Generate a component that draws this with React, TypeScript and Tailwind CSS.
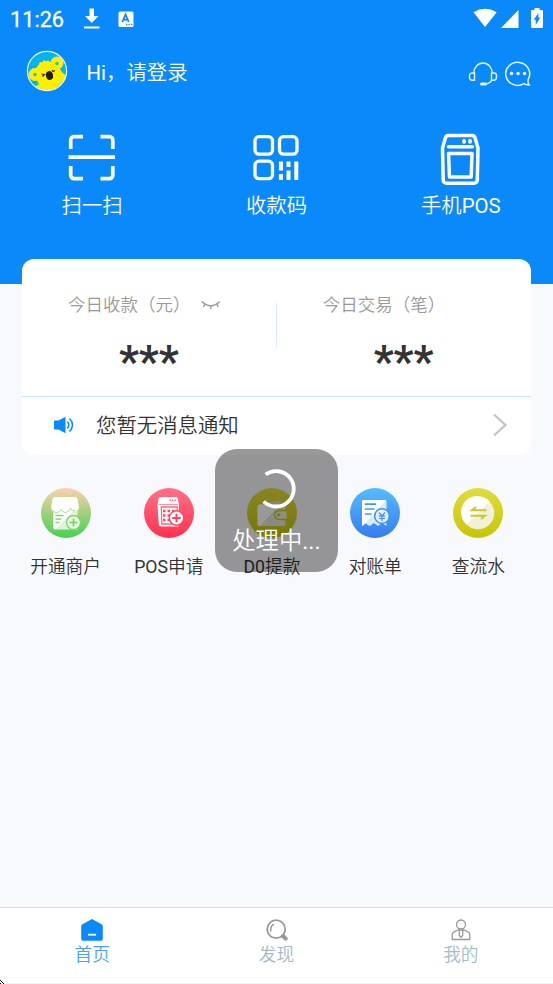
import type { ReactNode } from 'react';

function Avatar() {
  return (
    <svg width="42" height="42" viewBox="0 0 42 42">
      <defs>
        <clipPath id="face"><circle cx="21" cy="21" r="19.5" /></clipPath>
      </defs>
      <circle cx="21" cy="21" r="20" fill="#00b4f0" />
      <g clipPath="url(#face)">
        <path d="M13 16l.5-4 3 .3 1-2.300 3 1.500 1.500-1.500 2 3 5 1 8 9 6 5v14H6l1-4 6-3.500-4-8z" fill="#ffee00" />
        <circle cx="31" cy="13" r="6.500" fill="#ffee00" />
        <circle cx="9" cy="24.500" r="6.500" fill="#ffee00" />
        <ellipse cx="22" cy="23" rx="13" ry="11.500" fill="#ffee00" />
        <circle cx="31" cy="13.500" r="1.800" fill="#35bfae" />
        <circle cx="9" cy="24.500" r="1.800" fill="#35bfae" />
        <path d="M37 32l-8 7M12 34l-5 4" stroke="#8fca40" strokeWidth="1" />
        <ellipse cx="23.500" cy="25.500" rx="3.500" ry="4.400" transform="rotate(-15 23.500 25.500)" fill="#201a18" />
        <path d="M15.500 24l3 .5-2 2M26 20l1 1.500 2-1" stroke="#2b2505" strokeWidth="1.100" fill="none" />
      </g>
      <circle cx="21" cy="21" r="19.600" fill="none" stroke="#e6f6ff" strokeWidth="1.200" />
    </svg>
  );
}

function StatusBar() {
  return (
    <div className="flex h-[38px] items-center pl-[10px] pr-[10px]">
      <span className="w-[73px] pt-px text-[21.700px] leading-[38px] [-webkit-text-stroke:0.3px_white]">11:26</span>
      <svg width="18" height="22" viewBox="0 0 18 22" fill="#fff">
        <path d="M6.500 .5h4.500v7.500h4.500L8.750 15 2 8h4.500zM1 18.500h15.500v2H1z" />
      </svg>
      <svg className="-mt-px ml-[16.500px]" width="16" height="16" viewBox="0 0 16 16">
        <rect x=".5" y=".5" width="15" height="15.500" rx="1.500" fill="#fff" />
        <path d="M4.300 11L7.500 3.500 10.700 11M5.500 8.700h4" stroke="#0a89fb" strokeWidth="1.800" fill="none" />
        <path d="M8 13.500h1.300M10.500 13.500h1.300M13 13.500h1.300" stroke="#0a89fb" strokeWidth="1.300" />
      </svg>
      <div className="-mt-[2px] ml-auto flex items-center">
        <svg width="24" height="20" viewBox="0 0 24 20"><path d="M.5 4.200Q12-2.600 23.700 4.200L12 19z" fill="#fff" /></svg>
        <svg className="ml-[4px] mt-[2px]" width="18" height="18" viewBox="0 0 18 18"><path d="M17.500 0v18H0z" fill="#fff" /></svg>
        <svg className="ml-[12px]" width="12" height="20" viewBox="0 0 12 20">
          <path d="M3.500 0h5v2H11a1 1 0 0 1 1 1v16a1 1 0 0 1-1 1H1a1 1 0 0 1-1-1V3a1 1 0 0 1 1-1h2.500z" fill="#fff" />
          <path d="M7.300 5v4.500h2L4.700 17v-5.200h-2z" fill="#0a89fb" />
        </svg>
      </div>
    </div>
  );
}

function ScanIcon() {
  return (
    <svg width="52" height="52" viewBox="0 0 52 52" fill="none" stroke="#fff" strokeWidth="3.700">
      <path d="M4.700 17V8a3.300 3.300 0 0 1 3.300-3.300h9M34.500 4.700h9A3.300 3.300 0 0 1 46.800 8v9M4.700 34v9.300a3.300 3.300 0 0 0 3.300 3.300h9M34.500 46.600h9a3.300 3.300 0 0 0 3.300-3.300V34M2.500 25.200h46.500" />
    </svg>
  );
}

function QrIcon() {
  return (
    <svg width="52" height="52" viewBox="0 0 52 52" fill="none" stroke="#fff" strokeWidth="3.300">
      <rect x="5" y="4.700" width="17.500" height="17.500" rx="4" />
      <rect x="29.500" y="4.700" width="17.500" height="17.500" rx="4" />
      <rect x="5" y="29.200" width="17.500" height="17.500" rx="4" />
      <g strokeWidth="4">
        <path d="M30.900 29.500v9M30.900 42v6M38.500 29.500v5.500M38.500 38.500v9.500M46.300 29.500v18.500" />
      </g>
    </svg>
  );
}

function PosIcon() {
  return (
    <svg width="52" height="56" viewBox="0 0 52 56" fill="none" stroke="#fff" strokeWidth="3.500" strokeLinejoin="round">
      <path d="M13.500 5.500h23.500a3 3 0 0 1 3 2.200l3 10.300-.7 32a3.300 3.300 0 0 1-3.300 3.300h-27.500A3.300 3.300 0 0 1 8.200 50L7.500 18l3-10.300a3 3 0 0 1 3-2.200z" />
      <path d="M13.500 16.800h24" strokeLinecap="round" />
      <path d="M13.500 23.500h23.500l-.8 23.500H14.500z" />
      <ellipse cx="29" cy="11.300" rx="2" ry="2.500" fill="#fff" stroke="none" />
      <ellipse cx="35" cy="11.300" rx="2" ry="2.500" fill="#fff" stroke="none" />
    </svg>
  );
}

function QuickAction({ icon, label }: { icon: ReactNode; label: string }) {
  return (
    <div className="flex flex-1 flex-col items-center">
      <div className="flex h-[56px] items-center justify-center">{icon}</div>
      <span className="mt-[5px] text-[20.400px] leading-[30px]">{label}</span>
    </div>
  );
}

function Header() {
  return (
    <header className="h-[284px] bg-[#0a89fb] text-white">
      <StatusBar />
      <div className="flex h-[68px] items-center pl-[26px] pr-[21px]">
        <div className="-mt-[2px]"><Avatar /></div>
        <span className="ml-[18.500px] mt-[2px] text-[20.400px] leading-[30px]">Hi，请登录</span>
        <svg className="ml-auto mt-[4px]" width="30" height="26" viewBox="0 0 30 26" fill="none" stroke="#e5f5ff" strokeWidth="1.400">
          <path d="M6.500 12v7.200H4.500a3 3 0 0 1-3-3v-1.500A2.700 2.700 0 0 1 4.200 12zM23.500 12v7.200h2a3 3 0 0 0 3-3v-1.500a2.700 2.700 0 0 0-2.700-2.700z" />
          <path d="M5.800 12a9.200 10 0 0 1 18.400 0M24 19q-2 3.500-6 4" />
          <path d="M13.500 23h4" strokeWidth="3" strokeLinecap="round" />
        </svg>
        <svg className="ml-[6px] mt-[4px]" width="28" height="26" viewBox="0 0 28 26" fill="none" stroke="#e5f5ff" strokeWidth="1.500">
          <path d="M24.300 18.200A12 11.500 0 1 0 20 22.600q2.500 1.500 5.200 1.300-1.700-2-.9-5.700z" />
          <g fill="#fff" stroke="none"><circle cx="7.500" cy="12.500" r="1.700" /><circle cx="14" cy="12.500" r="1.700" /><circle cx="20.500" cy="12.500" r="1.700" /></g>
        </svg>
      </div>
      <div className="flex pt-[24px]">
        <QuickAction icon={<ScanIcon />} label="扫一扫" />
        <QuickAction icon={<QrIcon />} label="收款码" />
        <QuickAction icon={<PosIcon />} label="手机POS" />
      </div>
    </header>
  );
}

function Stat({ title, hidden }: { title: string; hidden?: boolean }) {
  return (
    <div className="flex-1 pt-[32px]">
      <div className="flex h-[28px] items-center pl-[46px] text-[17.500px] leading-[28px] text-[#999]">
        {title}
        {hidden && (
          <svg className="-mt-px ml-[10.500px]" width="20" height="12" viewBox="0 0 20 12" fill="none" stroke="#999" strokeWidth="1.400">
            <path d="M.8 2.500q9 8.500 18 0M4 5.200L2.500 8M9.800 6.800V10M15.800 5.200L17.300 8" />
          </svg>
        )}
      </div>
      <div className="mt-[13px] h-[50px] text-center text-[44px] font-bold leading-[60px] text-[#333]">***</div>
    </div>
  );
}

function SummaryCard() {
  return (
    <section className="-mt-[25px] ml-[22px] mr-[22.500px] h-[196px] rounded-xl bg-white">
      <div className="flex h-[138px] border-b border-[#c7e6ff]">
        <Stat title="今日收款（元）" hidden />
        <div className="mt-[44px] h-[44px] w-px bg-[#d7ebfc]" />
        <Stat title="今日交易（笔）" />
      </div>
      <div className="flex h-[57px] items-center pl-[31px] pr-[23px]">
        <svg className="-mt-px" width="22" height="18" viewBox="0 0 22 18" fill="none" stroke="#0a89fb" strokeWidth="1.500">
          <path d="M1 5.500a1 1 0 0 1 1-1h3.500L12.500 .8v16.400L5.500 13.500H2a1 1 0 0 1-1-1z" fill="#0a89fb" stroke="none" />
          <path d="M14.500 5.500q2.500 3.500 0 7M16.500 2.500q6 6.500 0 13" />
        </svg>
        <span className="ml-[21px] text-[20.400px] leading-[30px] text-[#333]">您暂无消息通知</span>
        <svg className="-mt-px ml-auto" width="16" height="24" viewBox="0 0 16 24" fill="none" stroke="#c3c3c3" strokeWidth="2.200">
          <path d="M2 1.500L13.500 12 2 22.500" />
        </svg>
      </div>
    </section>
  );
}

function Disc({ id, from, to, children }: { id: string; from: string; to: string; children: ReactNode }) {
  return (
    <svg width="50" height="50" viewBox="0 0 50 50">
      <defs>
        <linearGradient id={id} x1="0" y1="0" x2="0" y2="1"><stop stopColor={from} /><stop offset="1" stopColor={to} /></linearGradient>
      </defs>
      <circle cx="25" cy="25" r="25" fill={`url(#${id})`} />
      {children}
    </svg>
  );
}

function MerchantIcon() {
  return (
    <Disc id="merchant" from="#fdd0ac" to="#43d24f">
      <path d="M12.500 21h24v20.500h-22q-2 0-2-2z" fill="#dff3d8" />
      <path d="M12.500 21h22L14 41.500q-1.500 0-1.500-1.500z" fill="#fff" />
      <path d="M14 9h20q2 0 2.500 2l1.500 8q.3 4-4 4-3 0-4.500-2.500-1.700 4-5 4t-4.500-3q-1.500 3-4.500 3-5.500 0-5.200-5.500l1.200-8Q12 9 14 9z" fill="#fff" />
      <path d="M11.300 22q1.200 2.500 4.200 2.500 3 0 4.500-3 1.500 3 4.500 3t5-4q1.500 2.500 4.500 2.500" fill="none" stroke="#9cd488" strokeWidth=".9" />
      <path d="M14.500 27.500h8M14.500 31h5.500M14.500 34.500h4" stroke="#85d173" strokeWidth="1.400" />
      <circle cx="32.500" cy="34.500" r="7" fill="#eef9ea" stroke="#7bd66c" strokeWidth="1.400" />
      <path d="M32.500 30.500v8M28.500 34.500h8" stroke="#6fd45c" strokeWidth="1.700" />
    </Disc>
  );
}

function PosApplyIcon() {
  return (
    <Disc id="pos-apply" from="#ff7287" to="#ff3150">
      <path d="M16 9h16q1.700 0 2 2l1 6-.5 21.500H17q-2 0-2.200-2L13.500 17l1-6q.3-2 1.500-2z" fill="#fff" />
      <path d="M14.500 16.500h19.500" stroke="#ff8e9e" />
      <path d="M25.500 12.300h1.300M28 12.300h1.300M30.500 12.300h1.300" stroke="#ff536d" strokeWidth="1.500" />
      <path d="M17.300 19h16l-.5 17H17.800z" fill="none" stroke="#ff6b80" strokeWidth="1.300" />
      <path d="M19 23h12M19 27.500h12M19 32h8" stroke="#ff4863" strokeWidth="2.500" strokeDasharray="2.500 2" />
      <circle cx="32.500" cy="30" r="7.200" fill="#fff" stroke="#ff4762" strokeWidth="1.400" />
      <path d="M32.500 25.800v8.400M28.300 30h8.400" stroke="#ff435e" strokeWidth="2" />
    </Disc>
  );
}

function WalletIcon() {
  return (
    <Disc id="wallet" from="#e2de3e" to="#c9c60a">
      <path d="M14 16l17-3.500q3 0 3.500 3.500z" fill="#deddb8" />
      <rect x="10.500" y="16.500" width="28" height="21.500" rx="2.500" fill="#e6e6dc" />
      <path d="M13 16.500h20L13 38q-2.500 0-2.500-2.500V19q0-2.500 2.500-2.500z" fill="#fff" />
      <path d="M39.500 22.500H32q-4.500.7-4.500 4.500t4.500 4.500h7.500" fill="#eeeede" stroke="#c9c51a" strokeWidth="1.500" />
      <circle cx="31.500" cy="27" r="1.800" fill="#c9c51a" />
    </Disc>
  );
}

function BillIcon() {
  return (
    <Disc id="bill" from="#55bcff" to="#367cf0">
      <path d="M13.500 12H35q1.500 0 1.500 1.500V38L32 35l-4 3-4-3-4.500 3-3.700-2.500L12 38V13.500q0-1.500 1.500-1.500z" fill="#d9eaff" />
      <path d="M13.500 12H36L15 35.500 12 38V13.500q0-1.500 1.500-1.500z" fill="#fff" />
      <path d="M15.500 16.200h10M15.500 21h8.500M15.500 26h5.500" stroke="#4498f5" strokeWidth="1.700" strokeLinecap="round" />
      <circle cx="32" cy="28" r="7.300" fill="#e7f2ff" stroke="#4390f4" strokeWidth="1.500" />
      <path d="M29 24.500l3 3.500 3-3.500M32 28v5M28.700 28.200h6.600M28.700 30.500h6.600" stroke="#438ef4" strokeWidth="1.200" fill="none" />
    </Disc>
  );
}

function FlowIcon() {
  return (
    <Disc id="flow" from="#e0dd3d" to="#c8c505">
      <circle cx="25" cy="25" r="16.300" fill="#f0f0db" />
      <path d="M13.500 36.500A16.300 16.300 0 1 1 36.500 13.500z" fill="#fff" />
      <path d="M33.500 22.300H19l4-3.300M17.500 27.800H32l-4 3.300" fill="none" stroke="#cbc929" strokeWidth="2" />
    </Disc>
  );
}

const services = [
  { label: '开通商户', icon: <MerchantIcon /> },
  { label: 'POS申请', icon: <PosApplyIcon /> },
  { label: 'D0提款', icon: <WalletIcon /> },
  { label: '对账单', icon: <BillIcon /> },
  { label: '查流水', icon: <FlowIcon /> },
];

function LoadingToast() {
  return (
    <div className="absolute left-[215px] top-[449px] flex h-[123px] w-[123px] flex-col items-center rounded-[22px] bg-black/40 text-white">
      <svg className="mt-[18px]" width="44" height="44" viewBox="0 0 44 44" fill="none" stroke="#fff" strokeWidth="3.800">
        <path d="M10.600 7.500A17.700 17.700 0 1 1 8.700 34.500" />
      </svg>
      <span className="mt-[13px] whitespace-nowrap text-[23.300px] leading-[34px]">处理中...</span>
    </div>
  );
}

function Tab({ icon, label, active }: { icon: ReactNode; label: string; active?: boolean }) {
  return (
    <div className={`flex flex-1 flex-col items-center pt-[9px] ${active ? 'text-[#4ba1f8]' : 'text-[#a3bbc7]'}`}>
      <div className="flex h-[25px] items-center">{icon}</div>
      <span className="text-[17.700px] leading-[27px]">{label}</span>
    </div>
  );
}

export default function App() {
  return (
    <div
      lang="zh-CN"
      className="relative flex h-[984px] w-[553px] flex-col overflow-hidden bg-[#f8f9fc] font-[Roboto,'Noto_Sans_CJK_SC_DemiLight','Noto_Sans_CJK_SC',sans-serif]"
    >
      <Header />
      <SummaryCard />
      <section className="ml-[14px] mt-[33px] grid w-[516px] grid-cols-5">
        {services.map((s) => (
          <div key={s.label} className="flex flex-col items-center">
            {s.icon}
            <span className="mt-[16px] text-[17.700px] leading-[26px] text-[#333]">{s.label}</span>
          </div>
        ))}
      </section>
      <nav className="mt-auto flex h-[77px] border-t border-[#dcdcdc] bg-white">
        <Tab
          active
          label="首页"
          icon={
            <svg width="22" height="22" viewBox="0 0 22 22">
              <path d="M11 0l9.500 5.200q1.300.7 1.300 2V20q0 1.700-1.700 1.700H1.900Q.2 21.700.2 20V7.200q0-1.300 1.300-2z" fill="#0a89fb" />
              <path d="M7 15.700h8" stroke="#fff" strokeWidth="1.800" />
            </svg>
          }
        />
        <Tab
          label="发现"
          icon={
            <svg className="ml-[2px]" width="22" height="22" viewBox="0 0 22 22" fill="none" stroke="#999">
              <circle cx="10.200" cy="10.200" r="9" strokeWidth="1.800" />
              <path d="M4.800 12.500Q4 7 7.800 5.300" strokeWidth="1.500" />
              <path d="M17 17l2.700 2.700" strokeWidth="4" strokeLinecap="round" />
            </svg>
          }
        />
        <Tab
          label="我的"
          icon={
            <svg width="20" height="22" viewBox="0 0 20 22" fill="none" stroke="#999" strokeWidth="1.300">
              <circle cx="10" cy="5.500" r="4.500" />
              <path d="M8 10.500L3 12.800Q1.200 13.700 1.200 16v4.500h17.600V16q0-2.300-1.800-3.200l-5-2.300M8.300 11v5.500l1.700 1.800 1.700-1.800V11z" />
            </svg>
          }
        />
      </nav>
      <LoadingToast />
      <div className="absolute bottom-0 left-0 h-px w-full bg-[#f3f3f3]" />
      <svg className="absolute bottom-0 left-0" width="4" height="4" viewBox="0 0 4 4"><path d="M0 0h1v1H0zM1 1h1v1H1zM2 2h1v1H2zM3 3h1v1H3zM0 3h1v1H0z" fill="#111" /></svg>
    </div>
  );
}
